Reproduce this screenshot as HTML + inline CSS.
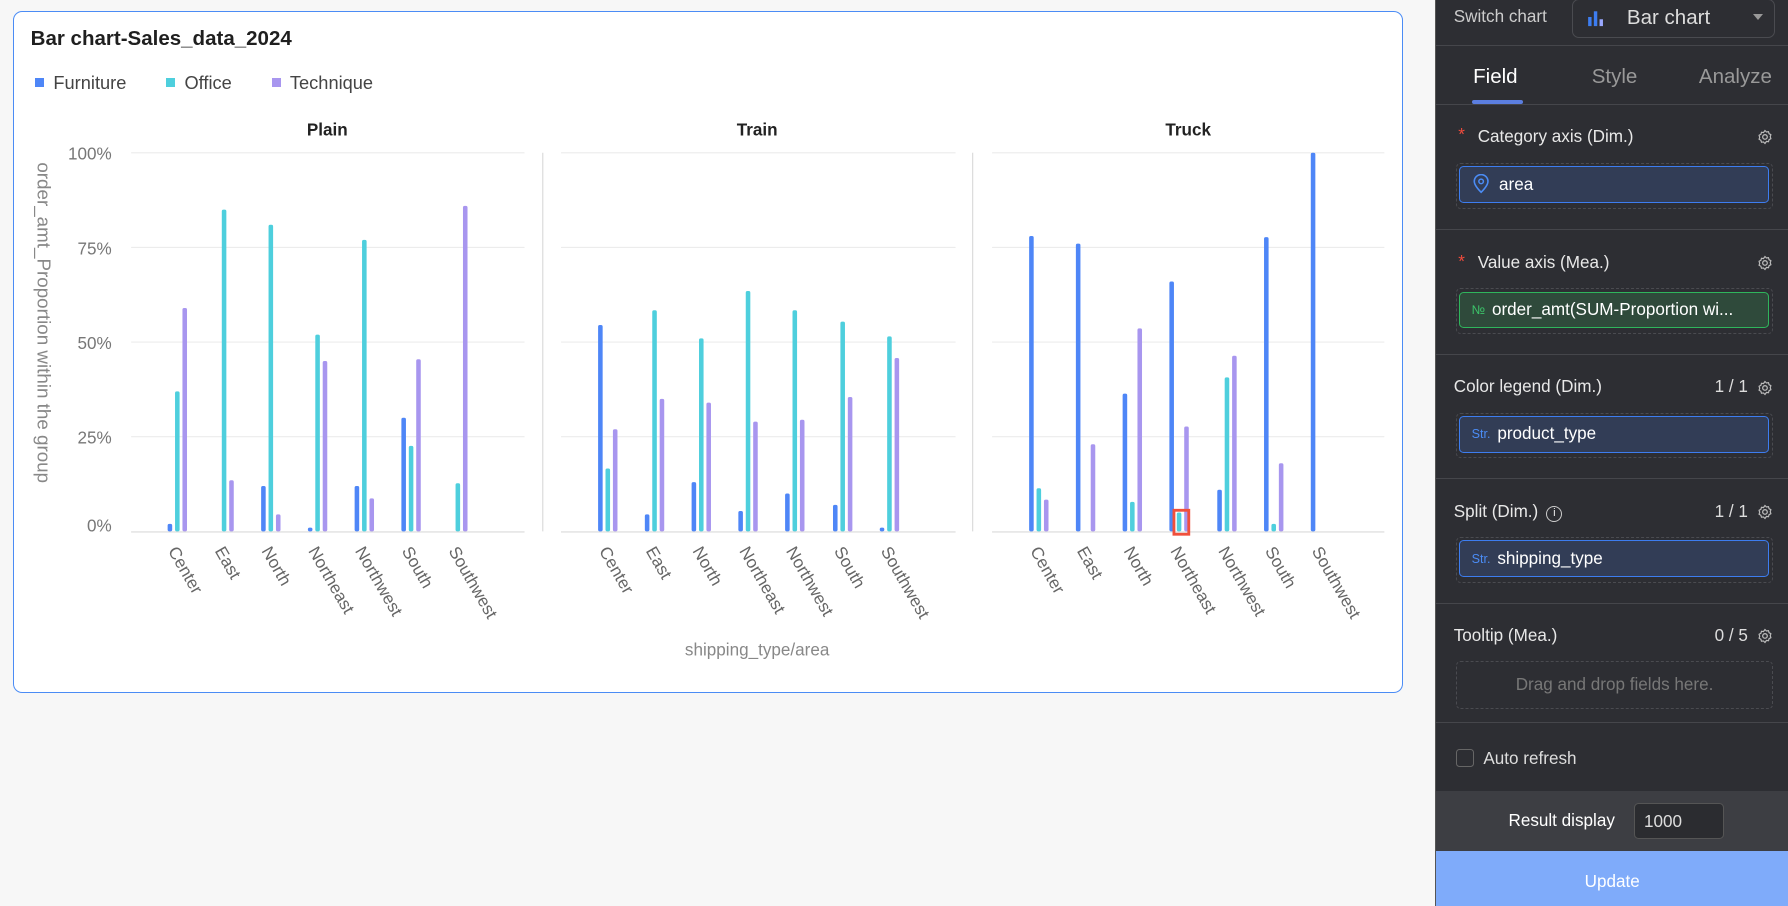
<!DOCTYPE html>
<html><head><meta charset="utf-8"><style>
*{box-sizing:border-box;margin:0;padding:0}
html,body{width:1788px;height:906px;overflow:hidden;background:#f7f7f7}
#root{zoom:1.14031;width:1568px;height:795px;position:relative;font-family:"Liberation Sans",sans-serif}
.card{position:absolute;left:11px;top:10px;width:1219px;height:598px;background:#fff;border:1px solid #4b8cf5;border-radius:8px}
.title{position:absolute;left:15px;top:13px;font-size:18px;font-weight:bold;color:#1f1f1f}
.legend{position:absolute;left:19px;top:52px;font-size:16px;color:#444;display:flex;gap:0}
.legend span{display:inline-flex;align-items:center;margin-right:35px}
.legend i{display:inline-block;width:8px;height:8px;margin-right:8px}
.panel{position:absolute;left:1258px;top:0;width:310px;height:795px;background:#2d2e33;border-left:1px solid #555;color:#e8e8e8;font-size:15px}
.row{position:absolute;left:0;width:310px;border-bottom:1px solid #45464b}
.lbl{position:absolute;left:16px}
.gear{position:absolute;right:14px;width:14px;height:14px}
.cnt{position:absolute;right:36px;color:#ddd}
.box{position:absolute;left:18px;width:278px;height:40px;border:1px dashed #4a4b50;border-radius:4px}
.pill{position:absolute;left:2px;top:2px;width:272px;height:32px;border:1.5px solid #3d7df0;background:#323d56;border-radius:4px;display:flex;align-items:center;padding-left:10px;font-size:15px;color:#fff}
.pill b{font-weight:normal;color:#4b8cf5;font-size:11px;margin-right:6px}
</style></head><body><div id="root">
<div class="card">
<div class="title">Bar chart-Sales_data_2024</div>
<div class="legend"><span><i style="background:#4e86f7"></i>Furniture</span><span><i style="background:#4ecfdd"></i>Office</span><span><i style="background:#a896ef"></i>Technique</span></div>
</div>
<svg style="position:absolute;left:0;top:0" width="1240" height="610" font-family="Liberation Sans, sans-serif">
<g stroke="#ececec" stroke-width="1">
<line x1="115" x2="460" y1="134" y2="134"/><line x1="115" x2="460" y1="217" y2="217"/><line x1="115" x2="460" y1="300" y2="300"/><line x1="115" x2="460" y1="383" y2="383"/>
<line x1="492" x2="838" y1="134" y2="134"/><line x1="492" x2="838" y1="217" y2="217"/><line x1="492" x2="838" y1="300" y2="300"/><line x1="492" x2="838" y1="383" y2="383"/>
<line x1="870" x2="1214" y1="134" y2="134"/><line x1="870" x2="1214" y1="217" y2="217"/><line x1="870" x2="1214" y1="300" y2="300"/><line x1="870" x2="1214" y1="383" y2="383"/>
</g>
<g stroke="#d9d9d9"><line x1="476" x2="476" y1="134" y2="466"/><line x1="853" x2="853" y1="134" y2="466"/>
<line x1="115" x2="460" y1="466.5" y2="466.5"/><line x1="492" x2="838" y1="466.5" y2="466.5"/><line x1="870" x2="1214" y1="466.5" y2="466.5"/></g>
<g font-size="15" fill="#777" text-anchor="end"><text x="98" y="140">100%</text><text x="98" y="223">75%</text><text x="98" y="306">50%</text><text x="98" y="389">25%</text><text x="98" y="466">0%</text></g>
<text transform="translate(33,283) rotate(90)" text-anchor="middle" font-size="16.5" fill="#888">order_amt_Proportion within the group</text>
<g font-size="15" font-weight="bold" fill="#222" text-anchor="middle"><text x="287" y="119">Plain</text><text x="664" y="119">Train</text><text x="1042" y="119">Truck</text></g>
<text x="664" y="575" text-anchor="middle" font-size="15" fill="#888">shipping_type/area</text>
<g fill="#4e86f7">
<rect x="147" y="459.4" width="4" height="6.6" rx="1.5"/><rect x="229" y="426.2" width="4" height="39.8" rx="1.5"/><rect x="270" y="462.7" width="4" height="3.3" rx="1.5"/><rect x="311" y="426.2" width="4" height="39.8" rx="1.5"/><rect x="352" y="366.4" width="4" height="99.6" rx="1.5"/>
<rect x="524.5" y="285" width="4" height="181" rx="1.5"/><rect x="565.5" y="451.1" width="4" height="14.9" rx="1.5"/><rect x="606.5" y="422.8" width="4" height="43.2" rx="1.5"/><rect x="647.5" y="448.1" width="4" height="17.9" rx="1.5"/><rect x="688.5" y="432.8" width="4" height="33.2" rx="1.5"/><rect x="730.5" y="442.8" width="4" height="23.2" rx="1.5"/><rect x="771.5" y="462.7" width="4" height="3.3" rx="1.5"/>
<rect x="902.5" y="207" width="4" height="259" rx="1.5"/><rect x="943.5" y="213.7" width="4" height="252.3" rx="1.5"/><rect x="984.5" y="345.2" width="4" height="120.8" rx="1.5"/><rect x="1025.5" y="246.9" width="4" height="219.1" rx="1.5"/><rect x="1067.5" y="429.5" width="4" height="36.5" rx="1.5"/><rect x="1108.5" y="208" width="4" height="258" rx="1.5"/><rect x="1149.5" y="134" width="4" height="332" rx="1.5"/>
</g>
<g fill="#4ecfdd">
<rect x="153.5" y="343.2" width="4" height="122.8" rx="1.5"/><rect x="194.5" y="183.8" width="4" height="282.2" rx="1.5"/><rect x="235.5" y="197.1" width="4" height="268.9" rx="1.5"/><rect x="276.5" y="293.4" width="4" height="172.6" rx="1.5"/><rect x="317.5" y="210.4" width="4" height="255.6" rx="1.5"/><rect x="358.5" y="391" width="4" height="75" rx="1.5"/><rect x="399.5" y="423.8" width="4" height="42.2" rx="1.5"/>
<rect x="531" y="410.9" width="4" height="55.1" rx="1.5"/><rect x="572" y="272.1" width="4" height="193.9" rx="1.5"/><rect x="613" y="296.7" width="4" height="169.3" rx="1.5"/><rect x="654" y="255.2" width="4" height="210.8" rx="1.5"/><rect x="695" y="272.1" width="4" height="193.9" rx="1.5"/><rect x="737" y="282.1" width="4" height="183.9" rx="1.5"/><rect x="778" y="295" width="4" height="171" rx="1.5"/>
<rect x="909" y="428.2" width="4" height="37.8" rx="1.5"/><rect x="991" y="440.1" width="4" height="25.9" rx="1.5"/><rect x="1032" y="449.4" width="4" height="16.6" rx="1.5"/><rect x="1074" y="330.9" width="4" height="135.1" rx="1.5"/><rect x="1115" y="459.4" width="4" height="6.6" rx="1.5"/>
</g>
<g fill="#a896ef">
<rect x="160" y="270.1" width="4" height="195.9" rx="1.5"/><rect x="201" y="421.2" width="4" height="44.8" rx="1.5"/><rect x="242" y="451.1" width="4" height="14.9" rx="1.5"/><rect x="283" y="316.6" width="4" height="149.4" rx="1.5"/><rect x="324" y="437.1" width="4" height="28.9" rx="1.5"/><rect x="365" y="315" width="4" height="151" rx="1.5"/><rect x="406" y="180.5" width="4" height="285.5" rx="1.5"/>
<rect x="537.5" y="376.4" width="4" height="89.6" rx="1.5"/><rect x="578.5" y="349.8" width="4" height="116.2" rx="1.5"/><rect x="619.5" y="353.1" width="4" height="112.9" rx="1.5"/><rect x="660.5" y="369.7" width="4" height="96.3" rx="1.5"/><rect x="701.5" y="368.1" width="4" height="97.9" rx="1.5"/><rect x="743.5" y="348.1" width="4" height="117.9" rx="1.5"/><rect x="784.5" y="314" width="4" height="152" rx="1.5"/>
<rect x="915.5" y="438.1" width="4" height="27.9" rx="1.5"/><rect x="956.5" y="389.6" width="4" height="76.4" rx="1.5"/><rect x="997.5" y="288" width="4" height="178" rx="1.5"/><rect x="1038.5" y="374" width="4" height="92" rx="1.5"/><rect x="1080.5" y="312" width="4" height="154" rx="1.5"/><rect x="1121.5" y="406.2" width="4" height="59.8" rx="1.5"/>
</g>
<rect x="1029.5" y="447.5" width="13" height="21" fill="none" stroke="#f0503c" stroke-width="2.5"/>
<g font-size="15" fill="#666">
<text transform="translate(147,483) rotate(60)">Center</text><text transform="translate(188,483) rotate(60)">East</text><text transform="translate(229,483) rotate(60)">North</text><text transform="translate(270,483) rotate(60)">Northeast</text><text transform="translate(311,483) rotate(60)">Northwest</text><text transform="translate(352,483) rotate(60)">South</text><text transform="translate(393,483) rotate(60)">Southwest</text>
<text transform="translate(525,483) rotate(60)">Center</text><text transform="translate(566,483) rotate(60)">East</text><text transform="translate(607,483) rotate(60)">North</text><text transform="translate(648,483) rotate(60)">Northeast</text><text transform="translate(689,483) rotate(60)">Northwest</text><text transform="translate(731,483) rotate(60)">South</text><text transform="translate(772,483) rotate(60)">Southwest</text>
<text transform="translate(903,483) rotate(60)">Center</text><text transform="translate(944,483) rotate(60)">East</text><text transform="translate(985,483) rotate(60)">North</text><text transform="translate(1026,483) rotate(60)">Northeast</text><text transform="translate(1068,483) rotate(60)">Northwest</text><text transform="translate(1109,483) rotate(60)">South</text><text transform="translate(1150,483) rotate(60)">Southwest</text>
</g>
</svg>

<div class="panel">
<div class="row" style="top:0;height:40px">
<span class="lbl" style="top:6px;color:#ccc">Switch chart</span>
<div style="position:absolute;left:120px;top:-1px;width:178px;height:34px;border:1px solid #4a4b50;border-radius:6px">
<svg style="position:absolute;left:12px;top:8px" width="16" height="16"><rect x="1" y="7" width="3" height="8" fill="#3d7df0"/><rect x="6" y="2" width="3" height="13" fill="#3d7df0"/><rect x="11" y="9" width="3" height="6" fill="#9aa8ff"/></svg>
<span style="position:absolute;left:47px;top:5px;font-size:18px;color:#ddd">Bar chart</span>
<span style="position:absolute;right:10px;top:12px;width:0;height:0;border-left:5px solid transparent;border-right:5px solid transparent;border-top:6px solid #999"></span>
</div></div>
<div class="row" style="top:40px;height:52px">
<span style="position:absolute;left:33px;top:17px;font-size:18px;color:#fff">Field</span>
<span style="position:absolute;left:137px;top:17px;font-size:18px;color:#999">Style</span>
<span style="position:absolute;left:231px;top:17px;font-size:18px;color:#999">Analyze</span>
<div style="position:absolute;left:32px;top:48px;width:45px;height:3px;background:#5b7ee0;border-radius:2px"></div>
</div>
<div class="row" style="top:92px;height:110px">
<span class="lbl" style="left:20px;top:18px;color:#f04b3c">*</span><span class="lbl" style="left:37px;top:19px">Category axis (Dim.)</span>
<svg class="gear" style="top:21px" viewBox="0 0 16 16"><circle cx="8" cy="8" r="2.3" fill="none" stroke="#bbb" stroke-width="1.3"/><path d="M8 1.5l1.5 1.5 2-.3.6 2 1.8 1-.6 2 .6 2-1.8 1-.6 2-2-.3L8 14.5 6.5 13l-2 .3-.6-2-1.8-1 .6-2-.6-2 1.8-1 .6-2 2 .3z" fill="none" stroke="#bbb" stroke-width="1.2"/></svg>
<div class="box" style="top:51px"><div class="pill"><svg width="16" height="18" style="margin-right:8px"><path d="M8 16s-6-5.5-6-9.5a6 6 0 0112 0c0 4-6 9.5-6 9.5z" fill="none" stroke="#4b8cf5" stroke-width="1.4"/><circle cx="8" cy="6.5" r="2" fill="none" stroke="#4b8cf5" stroke-width="1.3"/></svg>area</div></div>
</div>
<div class="row" style="top:202px;height:109px">
<span class="lbl" style="left:20px;top:19px;color:#f04b3c">*</span><span class="lbl" style="left:37px;top:20px">Value axis (Mea.)</span>
<svg class="gear" style="top:22px" viewBox="0 0 16 16"><circle cx="8" cy="8" r="2.3" fill="none" stroke="#bbb" stroke-width="1.3"/><path d="M8 1.5l1.5 1.5 2-.3.6 2 1.8 1-.6 2 .6 2-1.8 1-.6 2-2-.3L8 14.5 6.5 13l-2 .3-.6-2-1.8-1 .6-2-.6-2 1.8-1 .6-2 2 .3z" fill="none" stroke="#bbb" stroke-width="1.2"/></svg>
<div class="box" style="top:51px"><div class="pill" style="border-color:#2fb55c;background:#2f4a3b"><b style="color:#3cc46a">№</b>order_amt(SUM-Proportion wi...</div></div>
</div>
<div class="row" style="top:311px;height:109px">
<span class="lbl" style="top:20px">Color legend (Dim.)</span><span class="cnt" style="top:20px">1 / 1</span>
<svg class="gear" style="top:22px" viewBox="0 0 16 16"><circle cx="8" cy="8" r="2.3" fill="none" stroke="#bbb" stroke-width="1.3"/><path d="M8 1.5l1.5 1.5 2-.3.6 2 1.8 1-.6 2 .6 2-1.8 1-.6 2-2-.3L8 14.5 6.5 13l-2 .3-.6-2-1.8-1 .6-2-.6-2 1.8-1 .6-2 2 .3z" fill="none" stroke="#bbb" stroke-width="1.2"/></svg>
<div class="box" style="top:51px"><div class="pill"><b>Str.</b>product_type</div></div>
</div>
<div class="row" style="top:420px;height:110px">
<span class="lbl" style="top:20px">Split (Dim.) <span style="display:inline-block;width:14px;height:14px;border:1.3px solid #ccc;border-radius:50%;font-size:10px;text-align:center;line-height:12px;vertical-align:1px;margin-left:3px">i</span></span><span class="cnt" style="top:20px">1 / 1</span>
<svg class="gear" style="top:22px" viewBox="0 0 16 16"><circle cx="8" cy="8" r="2.3" fill="none" stroke="#bbb" stroke-width="1.3"/><path d="M8 1.5l1.5 1.5 2-.3.6 2 1.8 1-.6 2 .6 2-1.8 1-.6 2-2-.3L8 14.5 6.5 13l-2 .3-.6-2-1.8-1 .6-2-.6-2 1.8-1 .6-2 2 .3z" fill="none" stroke="#bbb" stroke-width="1.2"/></svg>
<div class="box" style="top:51px"><div class="pill"><b>Str.</b>shipping_type</div></div>
</div>
<div class="row" style="top:530px;height:104px">
<span class="lbl" style="top:19px">Tooltip (Mea.)</span><span class="cnt" style="top:19px">0 / 5</span>
<svg class="gear" style="top:21px" viewBox="0 0 16 16"><circle cx="8" cy="8" r="2.3" fill="none" stroke="#bbb" stroke-width="1.3"/><path d="M8 1.5l1.5 1.5 2-.3.6 2 1.8 1-.6 2 .6 2-1.8 1-.6 2-2-.3L8 14.5 6.5 13l-2 .3-.6-2-1.8-1 .6-2-.6-2 1.8-1 .6-2 2 .3z" fill="none" stroke="#bbb" stroke-width="1.2"/></svg>
<div class="box" style="top:50px;height:42px;text-align:center;line-height:40px;color:#777">Drag and drop fields here.</div>
</div>
<div style="position:absolute;left:18px;top:657px;width:16px;height:16px;border:1px solid #666;border-radius:3px"></div>
<span style="position:absolute;left:42px;top:657px;color:#ddd">Auto refresh</span>
<div style="position:absolute;left:0;top:694px;width:310px;height:52px;background:#3d3e43">
<span style="position:absolute;left:64px;top:17px;color:#fff">Result display</span>
<div style="position:absolute;left:174px;top:10px;width:79px;height:32px;border:1px solid #555;border-radius:4px;background:#2b2c30;color:#ddd;padding:7px 8px">1000</div>
</div>
<div style="position:absolute;left:0;top:746px;width:310px;height:49px;background:#7fabfa;color:#fff;text-align:center;line-height:54px">Update</div>
</div>
</div></body></html>
